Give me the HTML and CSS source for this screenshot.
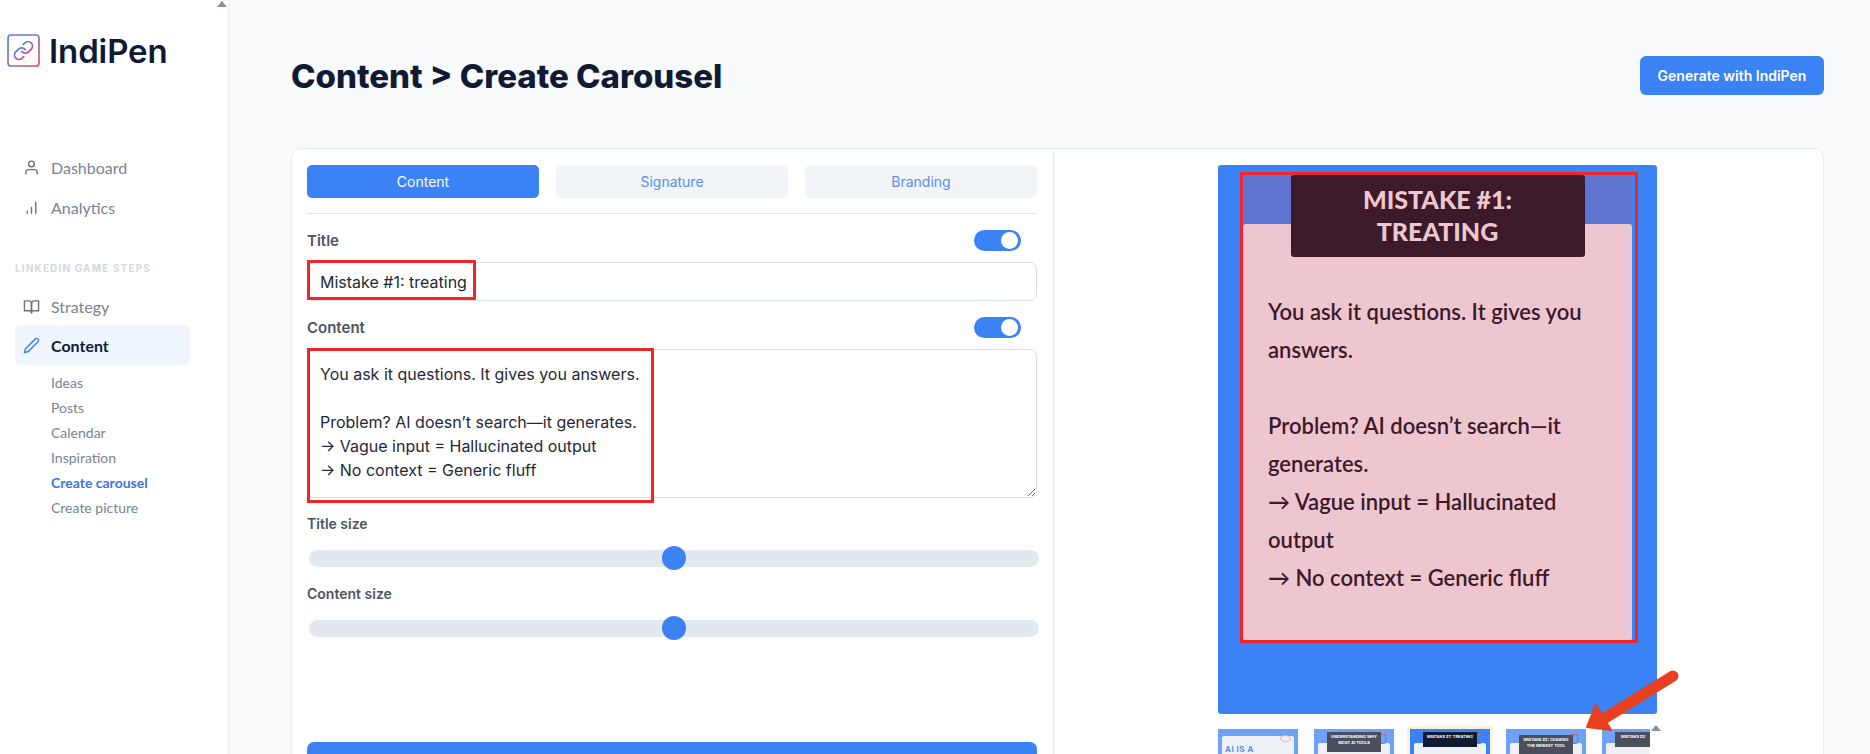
FILE: index.html
```html
<!DOCTYPE html>
<html lang="en">
<head>
    <meta charset="UTF-8">
    <meta name="viewport" content="width=device-width, initial-scale=1.0">
    <title>IndiPen - Create Carousel</title>
    <link rel="stylesheet" href="styles.css">
</head>
<body>
    <aside class="sidebar">
        <span class="scroll-arrow sidebar-arrow"></span>
        <div class="logo">
            <svg class="logo-icon" viewBox="0 0 32 32" fill="none">
                <defs>
                    <linearGradient id="logoGrad" x1="0" y1="0" x2="1" y2="1">
                        <stop offset="0" stop-color="#3b82f6"/>
                        <stop offset="0.5" stop-color="#8b6fc0"/>
                        <stop offset="1" stop-color="#ef4444"/>
                    </linearGradient>
                </defs>
                <rect x="1" y="1" width="30" height="30" rx="3" stroke="url(#logoGrad)" stroke-width="1.6"/>
                <g transform="translate(5.5 5.5) scale(0.875)" stroke="url(#logoGrad)" stroke-width="2" stroke-linecap="round" stroke-linejoin="round">
                    <path d="M10 13a5 5 0 0 0 7.54.54l3-3a5 5 0 0 0-7.07-7.07l-1.72 1.71"/>
                    <path d="M14 11a5 5 0 0 0-7.54-.54l-3 3a5 5 0 0 0 7.07 7.07l1.71-1.71"/>
                </g>
            </svg>
            <span class="logo-text">IndiPen</span>
        </div>

        <nav class="nav-top">
            <a class="nav-item">
                <svg class="nav-icon" viewBox="0 0 24 24"><path d="M20 21v-2a4 4 0 0 0-4-4H8a4 4 0 0 0-4 4v2"/><circle cx="12" cy="7" r="4"/></svg>
                Dashboard
            </a>
            <a class="nav-item">
                <svg class="nav-icon" viewBox="0 0 24 24"><path d="M6 20v-3M12 20v-8M18 20V5"/></svg>
                Analytics
            </a>
        </nav>

        <div class="nav-heading">LINKEDIN GAME STEPS</div>

        <nav>
            <a class="nav-item strategy">
                <svg class="nav-icon" viewBox="0 0 24 24"><path d="M2 4h6a4 4 0 0 1 4 4v13a3 3 0 0 0-3-3H2z"/><path d="M22 4h-6a4 4 0 0 0-4 4v13a3 3 0 0 1 3-3h7z"/></svg>
                Strategy
            </a>
            <a class="nav-item active">
                <svg class="nav-icon" viewBox="0 0 24 24"><path d="M17 3a2.85 2.83 0 1 1 4 4L7.5 20.5 2 22l1.5-5.5Z"/></svg>
                Content
            </a>
            <div class="sub-nav">
                <a>Ideas</a>
                <a>Posts</a>
                <a>Calendar</a>
                <a>Inspiration</a>
                <a class="current">Create carousel</a>
                <a>Create picture</a>
            </div>
        </nav>
    </aside>

    <main class="main">
        <header class="page-header">
            <h1>Content &gt; Create Carousel</h1>
            <button class="generate-btn">Generate with IndiPen</button>
        </header>

        <section class="card">
            <div class="editor">
                <div class="tabs">
                    <button class="tab active">Content</button>
                    <button class="tab">Signature</button>
                    <button class="tab">Branding</button>
                </div>

                <div class="field-head first">
                    <label for="title">Title</label>
                    <span class="toggle"></span>
                </div>
                <div class="annotated">
                    <input id="title" class="text-input" type="text" value="Mistake #1: treating">
                    <span class="red-box title-box"></span>
                </div>

                <div class="field-head">
                    <label for="content">Content</label>
                    <span class="toggle"></span>
                </div>
                <div class="annotated">
                    <textarea id="content" class="text-area">You ask it questions. It gives you answers.

Problem? AI doesn’t search—it generates.
→ Vague input = Hallucinated output
→ No context = Generic fluff</textarea>
                    <span class="red-box content-box"></span>
                </div>

                <label class="range-label" for="titleSize">Title size</label>
                <input id="titleSize" class="range" type="range" min="0" max="100" value="50">

                <label class="range-label second" for="contentSize">Content size</label>
                <input id="contentSize" class="range" type="range" min="0" max="100" value="50">

                <button class="save-btn"></button>
            </div>

            <div class="preview-col">
                <div class="preview">
                    <div class="slide">
                        <div class="slide-title">MISTAKE #1:<br>TREATING</div>
                        <div class="slide-body">
                            <p>You ask it questions. It gives you answers.</p>
                            <p class="gap">Problem? AI doesn’t search—it generates.</p>
                            <p>→ Vague input = Hallucinated output</p>
                            <p>→ No context = Generic fluff</p>
                        </div>
                    </div>
                    <span class="red-box slide-box"></span>
                </div>

                <div class="thumbs">
                    <div class="thumb first">
                        <div class="thumb-card"><span class="thumb-big">AI IS A</span></div>
                        <span class="thumb-eye"></span>
                    </div>
                    <div class="thumb">
                        <div class="thumb-title">UNDERSTANDING WHY MOST AI TOOLS</div>
                        <div class="thumb-card"></div>
                        <span class="thumb-del"></span>
                    </div>
                    <div class="thumb selected">
                        <div class="thumb-title">MISTAKE #1: TREATING</div>
                        <div class="thumb-card"></div>
                        <span class="thumb-del"></span>
                    </div>
                    <div class="thumb low">
                        <div class="thumb-title">MISTAKE #2: CHASING THE NEWEST TOOL</div>
                        <div class="thumb-card"></div>
                        <span class="thumb-del"></span>
                    </div>
                    <div class="thumb last">
                        <div class="thumb-title">MISTAKE #3</div>
                        <div class="thumb-card"></div>
                    </div>
                </div>
                <span class="scroll-arrow thumbs-arrow"></span>
            </div>
        </section>
    </main>

    <svg class="arrow" width="100" height="70" viewBox="0 0 100 70">
        <path d="M88 8 L20 50" stroke="#e8401f" stroke-width="11" stroke-linecap="round"/>
        <path d="M2 59 L11 37 L26 62 Z" fill="#e8401f" stroke="#e8401f" stroke-width="2" stroke-linejoin="round"/>
    </svg>
</body>
</html>
```

FILE: styles.css
```css
* {
    box-sizing: border-box;
    margin: 0;
    padding: 0;
}

html, body {
    height: 754px;
    overflow: hidden;
}

body {
    display: flex;
    background-color: #f8fafc;
    font-family: 'Inter', 'Liberation Sans', sans-serif;
    color: #111827;
}

/* sidebar */
.sidebar {
    position: relative;
    width: 230px;
    flex-shrink: 0;
    background-color: white;
    border-right: 2px solid #eef1f6;
    padding: 32px 0 0 0;
}

.scroll-arrow {
    position: absolute;
    width: 0;
    height: 0;
    border-left: 5px solid transparent;
    border-right: 5px solid transparent;
    border-bottom: 6px solid #8b8f9c;
}

.sidebar-arrow {
    top: 1px;
    left: 217px;
}

.logo {
    display: flex;
    align-items: center;
    gap: 9px;
    height: 37px;
    padding-left: 7px;
}

.logo-icon {
    width: 33px;
    height: 33px;
}

.logo-text {
    font-family: 'Inter', sans-serif;
    font-size: 33px;
    font-weight: 600;
    letter-spacing: -0.1px;
    line-height: 34px;
    color: #111a33;
}

.nav-top {
    margin-top: 78px;
}

.nav-item {
    display: flex;
    align-items: center;
    gap: 11px;
    width: 175px;
    height: 40px;
    margin-left: 15px;
    padding-left: 8px;
    font-family: 'Lato', sans-serif;
    font-size: 16px;
    color: #7b8394;
    border-radius: 5px;
}

.nav-item.strategy {
    height: 37px;
}

.nav-icon {
    width: 17px;
    height: 17px;
    flex-shrink: 0;
    fill: none;
    stroke: #6b7280;
    stroke-width: 2;
    stroke-linecap: round;
    stroke-linejoin: round;
}

.nav-item.active {
    background-color: #eff6ff;
    color: #111a33;
    font-weight: 700;
}

.nav-item.active .nav-icon {
    stroke: #3b82f6;
}

.nav-heading {
    margin: 35px 0 0 15px;
    height: 26px;
    font-size: 10px;
    font-weight: 700;
    letter-spacing: 1.15px;
    color: #d3d8df;
}

.sub-nav {
    display: flex;
    flex-direction: column;
    padding: 5px 0 0 51px;
}

.sub-nav a {
    height: 25px;
    line-height: 25px;
    font-family: 'Lato', sans-serif;
    font-size: 14px;
    color: #7b8394;
}

.sub-nav a.current {
    color: #3f74e0;
    font-weight: 700;
}

/* main area */
.main {
    flex: 1;
    min-width: 0;
    padding: 56px 46px 0 61px;
}

.page-header {
    display: flex;
    justify-content: space-between;
    align-items: center;
    height: 39px;
    margin-bottom: 53px;
}

h1 {
    font-size: 33px;
    font-weight: 800;
    color: #111a33;
}

.generate-btn {
    width: 184px;
    height: 39px;
    background-color: #3b82f6;
    color: white;
    border: none;
    border-radius: 6px;
    font-family: 'Inter', sans-serif;
    font-size: 14px;
    font-weight: 600;
}

.card {
    display: flex;
    height: 640px;
    background-color: white;
    border: 1px solid #e8edf3;
    border-radius: 10px;
}

/* left column */
.editor {
    width: 762px;
    flex-shrink: 0;
    padding: 16px 16px 0 15px;
    border-right: 1px solid #e8edf3;
}

.tabs {
    display: flex;
    gap: 17px;
    padding-bottom: 15px;
    border-bottom: 1px solid #dfe6ed;
}

.tab {
    flex: 1;
    height: 33px;
    background-color: #f1f5f9;
    color: #5b8fe6;
    border: none;
    border-radius: 5px;
    font-family: 'Inter', sans-serif;
    font-size: 14px;
}

.tab.active {
    background-color: #3b82f6;
    color: white;
}

.field-head {
    display: flex;
    justify-content: space-between;
    align-items: center;
    height: 21px;
    margin: 16px 0 11px 0;
    padding-right: 16px;
}

.field-head label {
    font-size: 15px;
}

label {
    font-size: 14px;
    font-weight: 600;
    color: #4b5563;
}

.toggle {
    position: relative;
    width: 47px;
    height: 21px;
    background-color: #3b82f6;
    border-radius: 11px;
}

.toggle::after {
    content: "";
    position: absolute;
    top: 2px;
    right: 3px;
    width: 17px;
    height: 17px;
    background-color: white;
    border-radius: 50%;
}

.annotated {
    position: relative;
}

.text-input, .text-area {
    display: block;
    width: 100%;
    border: 1px solid #d9e0e8;
    border-radius: 7px;
    padding: 0 12px;
    font-family: 'Inter', sans-serif;
    font-size: 16px;
    color: #1f2937;
    outline: none;
}

.text-input {
    height: 39px;
}

.text-area {
    height: 149px;
    padding-top: 12px;
    line-height: 24px;
    resize: vertical;
}

.red-box {
    position: absolute;
    border: 3px solid #f0262b;
    pointer-events: none;
}

.title-box {
    top: -2px;
    left: 0;
    width: 169px;
    height: 40px;
}

.content-box {
    top: -1px;
    left: 0;
    width: 347px;
    height: 155px;
}

.range-label {
    display: block;
    margin-top: 16px;
    height: 20px;
    line-height: 20px;
}

.range-label.second {
    margin-top: 14px;
}

.range {
    display: block;
    -webkit-appearance: none;
    appearance: none;
    width: 730px;
    height: 24px;
    margin: 12px 0 0 2px;
    background: transparent;
    outline: none;
}

.range::-webkit-slider-runnable-track {
    height: 17px;
    background-color: #e2e8f0;
    border-radius: 9px;
}

.range::-webkit-slider-thumb {
    -webkit-appearance: none;
    width: 24px;
    height: 24px;
    margin-top: -3.5px;
    background-color: #3b82f6;
    border-radius: 50%;
}

.save-btn {
    display: block;
    width: 100%;
    height: 40px;
    margin-top: 102px;
    background-color: #3b82f6;
    border: none;
    border-radius: 7px;
}

/* right column */
.preview-col {
    position: relative;
    flex: 1;
    padding: 16px 0 0 164px;
}

.preview {
    position: relative;
    width: 439px;
    height: 549px;
    background-color: #3b82f6;
    border-radius: 3px;
    padding: 10px 25px 0 25px;
}

.slide {
    height: 466px;
    background-color: #5f73d0;
}

.slide-title {
    position: relative;
    z-index: 1;
    width: 294px;
    height: 82px;
    margin: 0 auto;
    padding-top: 8px;
    background-color: #3b1a2a;
    border-radius: 3px;
    font-family: 'Lato', sans-serif;
    font-size: 25px;
    font-weight: 900;
    line-height: 32px;
    text-align: center;
    color: #efc7cf;
}

.slide-body {
    height: 417px;
    margin-top: -33px;
    padding: 69px 20px 0 25px;
    background-color: #eec6cf;
    border-radius: 3px;
    font-family: 'Lato', sans-serif;
    font-size: 22px;
    font-weight: 600;
    line-height: 38px;
    color: #3b1a2a;
}

.slide-body .gap {
    margin-top: 38px;
}

.slide-box {
    top: 7px;
    left: 22px;
    width: 398px;
    height: 471px;
}

.thumbs {
    display: flex;
    gap: 16px;
    width: 432px;
    height: 40px;
    margin-top: 11px;
    padding: 4px 0;
    overflow: hidden;
}

.thumb {
    position: relative;
    flex-shrink: 0;
    width: 80px;
    height: 100px;
    background-color: #6fa1f6;
}

.thumb.selected {
    background-color: #3b82f6;
    box-shadow: 0 0 0 3px #fdf0dc;
}

.thumb-card {
    position: absolute;
    top: 14px;
    left: 4px;
    right: 4px;
    bottom: 4px;
    background-color: #eef1f6;
    border-radius: 2px;
}

.thumb.first .thumb-card {
    top: 7px;
    padding: 9px 0 0 3px;
}

.thumb-big {
    display: block;
    font-size: 8px;
    font-weight: 700;
    line-height: 8px;
    letter-spacing: 0.5px;
    color: #5b8fe6;
}

.thumb-eye {
    position: absolute;
    top: 6px;
    left: 62px;
    width: 11px;
    height: 7px;
    border: 1px solid #e3b5b8;
    border-radius: 50%;
}

.thumb-del {
    position: absolute;
    top: 5px;
    left: 64px;
    width: 8px;
    height: 10px;
    border: 1px solid #c9606c;
    border-radius: 2px;
}

.thumb-title {
    position: relative;
    z-index: 1;
    width: 54px;
    height: 20px;
    margin: 3px auto 0;
    padding-top: 2px;
    background-color: #4a4f5e;
    font-size: 4px;
    font-weight: 700;
    line-height: 5.5px;
    text-align: center;
    color: white;
}

.thumb.selected .thumb-title {
    height: 15px;
    background-color: #111a33;
}

.thumb.low .thumb-title {
    margin-top: 6px;
    height: 30px;
}

.thumb.last .thumb-title {
    height: 15px;
    padding-left: 6px;
    text-align: left;
}

.thumbs-arrow {
    left: 597px;
    top: 576px;
}

/* pointer drawn over the page */
.arrow {
    position: absolute;
    left: 1585px;
    top: 668px;
}
```
